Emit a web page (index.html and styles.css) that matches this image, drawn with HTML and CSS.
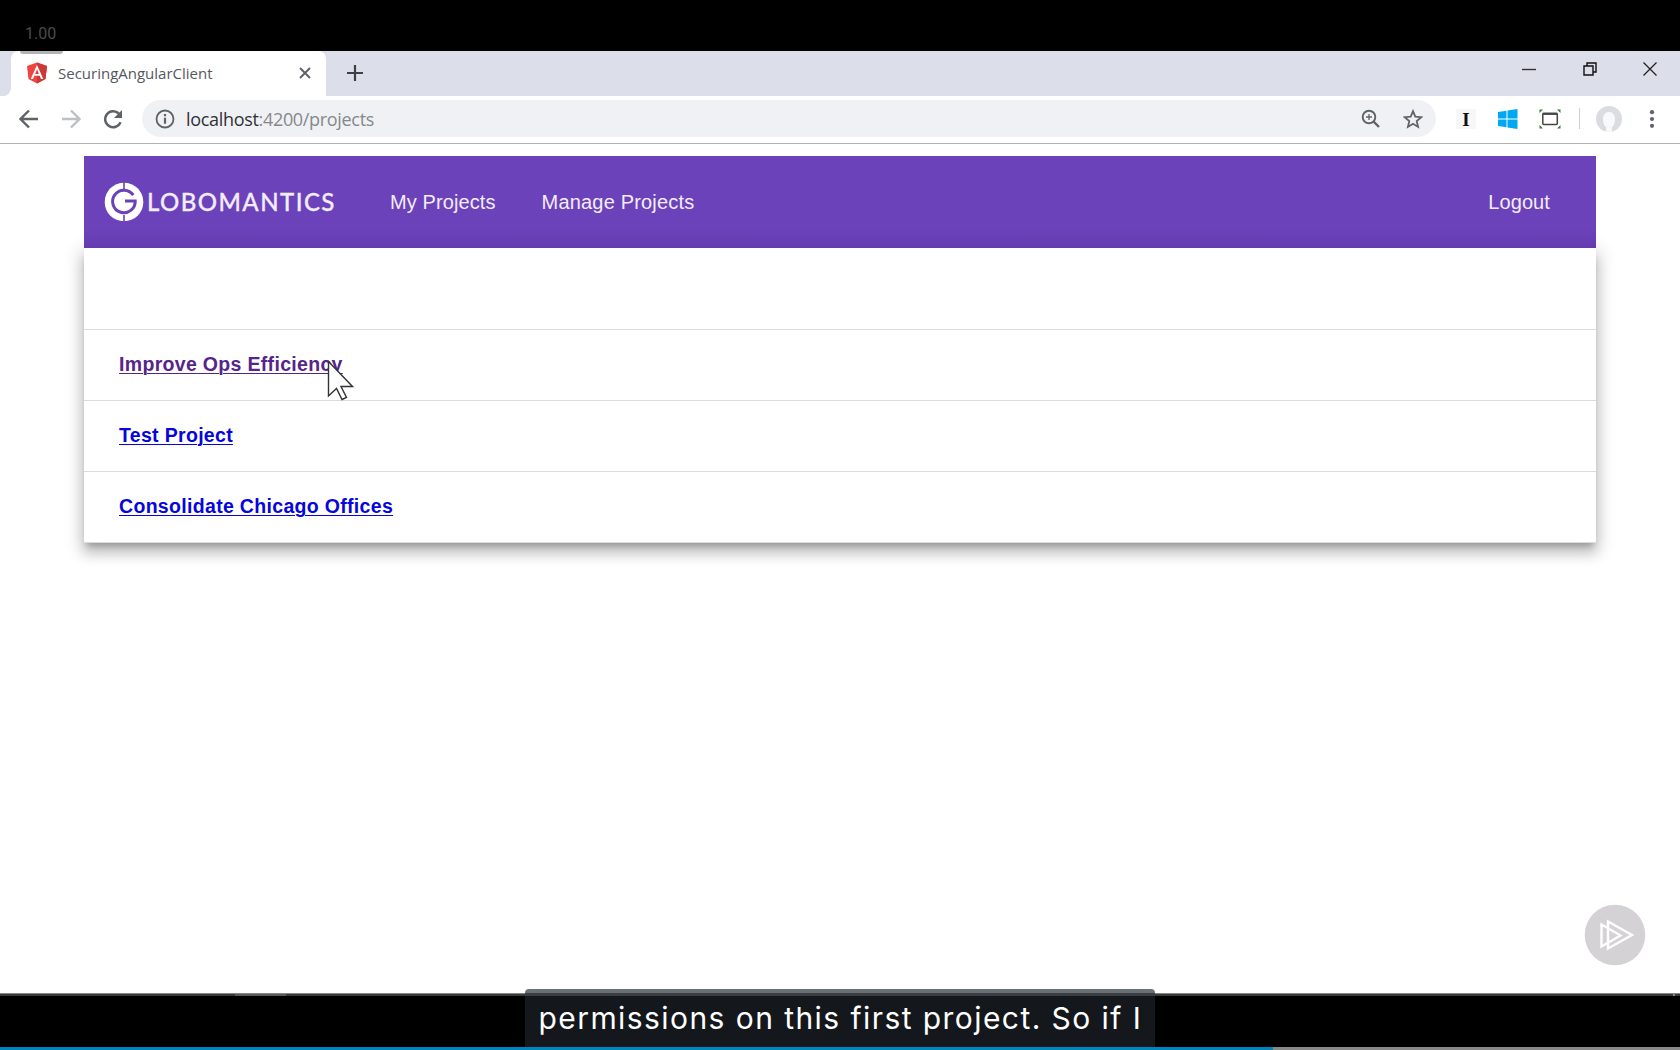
FILE: index.html
```html
<!DOCTYPE html>
<html lang="en">
<head>
<meta charset="utf-8">
<title>SecuringAngularClient</title>
<link rel="stylesheet" href="styles.css">
</head>
<body>
<div class="player">
  <div class="speed"><span>1.00</span></div>
  <div class="browser">
    <div class="tabbar">
      <div class="tab-edge"></div>
      <div class="tab">
        <span class="notch"></span>
        <svg class="favicon" width="22" height="22" viewBox="0 0 22 22"><path fill="#f0443e" d="M11 0.500 21 4l-1.500 13L11 21.500 2.500 17 1 4z"/><path fill="#c93a38" d="M11 .500 21 4l-1.500 13L11 21.500z"/><path fill="#fff" fill-rule="evenodd" d="M11 3 4.700 17H7l1.300-3.200h5.400L15 17h2.300zM11 7.300l1.800 4.600H9.200z"/></svg>
        <span class="tab-title">SecuringAngularClient</span>
        <svg class="tab-close" width="12" height="12" viewBox="0 0 12 12"><path d="M1 1l10 10M11 1 1 11" stroke="#5f6368" stroke-width="2"/></svg>
      </div>
      <svg class="new-tab" width="16" height="16" viewBox="0 0 16 16"><path d="M8 0v16M0 8h16" stroke="#3c4043" stroke-width="2.200"/></svg>
      <div class="window-buttons">
        <svg width="14" height="14" viewBox="0 0 14 14"><path d="M0 7.500h14" stroke="#333" stroke-width="1.400"/></svg>
        <svg width="14" height="14" viewBox="0 0 14 14"><path d="M1 4h9v9H1zM4 4V1h9v9h-3" fill="none" stroke="#111" stroke-width="1.400"/></svg>
        <svg width="14" height="14" viewBox="0 0 14 14"><path d="M.5.5l13 13M13.500.500l-13 13" stroke="#222" stroke-width="1.300"/></svg>
      </div>
    </div>
    <div class="toolbar">
      <svg class="nav-icon" width="20" height="20" viewBox="0 0 20 20"><path d="M19 10H2M10 1.500 1.500 10l8.500 8.500" fill="none" stroke="#5f6368" stroke-width="2.400"/></svg>
      <svg class="nav-icon" width="20" height="20" viewBox="0 0 20 20"><path d="M1 10h17M10 1.500l8.500 8.500-8.500 8.500" fill="none" stroke="#bdbfc2" stroke-width="2.400"/></svg>
      <svg class="nav-icon" width="20" height="20" viewBox="0 0 20 20"><path d="M17.600 13.200A8 8 0 1 1 15.800 4.500" fill="none" stroke="#5f6368" stroke-width="2.500"/><path d="M19 1v8h-8z" fill="#5f6368"/></svg>
      <div class="omnibox">
        <svg width="20" height="20" viewBox="0 0 20 20"><circle cx="10" cy="10" r="8.500" fill="none" stroke="#5f6368" stroke-width="1.800"/><path d="M10 8.800v6M10 5v2.200" stroke="#5f6368" stroke-width="2.200"/></svg>
        <span class="url"><b>localhost</b>:4200/projects</span>
        <svg class="zoom-icon" width="20" height="20" viewBox="0 0 20 20"><circle cx="8" cy="8" r="6.300" fill="none" stroke="#5f6368" stroke-width="1.900"/><path d="M12.500 12.500 18 18" stroke="#5f6368" stroke-width="2.400"/><path d="M8 5v6M5 8h6" stroke="#5f6368" stroke-width="1.300"/></svg>
        <svg class="star" width="20" height="20" viewBox="0 0 20 20"><path d="M10 2.200l2.300 5.500 6 .5-4.600 3.900 1.400 5.800-5.100-3.100-5.100 3.100 1.400-5.800L1.700 8.200l6-.5z" fill="none" stroke="#5f6368" stroke-width="1.800"/></svg>
      </div>
      <span class="ext-i">I</span>
      <svg class="ext" width="20" height="20" viewBox="0 0 20 20"><path fill="#00a8f3" d="M0 3l8.500-1.200v7.700H0zM9.500 1.600 19.500 0v9.500h-10zM0 10.500h8.500v7.700L0 17zM9.500 10.500h10V20l-10-1.500z"/></svg>
      <svg class="ext ext-capture" width="22" height="20" viewBox="0 0 22 20"><rect x="3.800" y="4.500" width="14.500" height="11" rx="1" fill="none" stroke="#444" stroke-width="1.500"/><path d="M3.500 4.800h15" stroke="#444" stroke-width="2.200"/><path d="M.500 4V.500H4zM18 .500h3.500V4zM21.500 16v3.500H18zM4 19.500H.500V16z" fill="#3c7a3c"/></svg>
      <span class="separator"></span>
      <svg class="avatar" width="26" height="26" viewBox="0 0 26 26"><circle cx="13" cy="13" r="13" fill="#dadce0"/><path d="M10 25.500l.2-4C7.900 19.500 7 16.500 7 13c0-4.300 2.500-7 6-7s6 2.700 6 7c0 3.500-.9 6.500-3.200 8.500l.2 4q-3 .8-6 0z" fill="#f8f9fa"/></svg>
      <svg class="menu" width="6" height="18" viewBox="0 0 6 18"><g fill="#5f6368"><circle cx="3" cy="2.200" r="2.100"/><circle cx="3" cy="9" r="2.100"/><circle cx="3" cy="15.800" r="2.100"/></g></svg>
    </div>
    <div class="page">
      <header class="app-bar">
        <svg class="logo-mark" width="40" height="40" viewBox="0 0 40 40"><circle cx="20" cy="20" r="19.300" fill="#fff"/><path d="M29.300 13.200A11.300 11.300 0 1 0 31.200 19H21" fill="none" stroke="#6c42ba" stroke-width="3"/><path d="M20 0v7M20 33v7" stroke="#6c42ba" stroke-width="1.600"/></svg>
        <span class="logo-text">LOBOMANTICS</span>
        <nav class="links"><a>My Projects</a><a>Manage Projects</a></nav>
        <a class="logout">Logout</a>
      </header>
      <main class="card">
        <div class="row row-head"></div>
        <div class="row"><a class="visited">Improve Ops Efficiency</a>
          <svg class="cursor" width="27" height="42" viewBox="0 0 27 42"><path d="M1.500 1.500v34.500l8-7.500 5.500 11 4.500-2-5.500-11h11.500z" fill="#fff" stroke="#333" stroke-width="1.400"/></svg>
        </div>
        <div class="row"><a>Test Project</a></div>
        <div class="row"><a>Consolidate Chicago Offices</a></div>
      </main>
      <svg class="badge" width="62" height="62" viewBox="0 0 62 62"><circle cx="31" cy="31" r="30.300" fill="#d4d2d5"/><path d="M17.500 20.500v22l19-11zM24 17.500v27L48 31z" fill="none" stroke="#fff" stroke-width="2.400"/></svg>
    </div>
  </div>
  <div class="bottom">
    <div class="seam"><span class="seam-mark"></span><span class="seam-end"></span></div>
    <div class="progress"><span></span></div>
    <div class="caption"><span>permissions on this first project. So if I</span></div>
  </div>
</div>
</body>
</html>
```
FILE: styles.css
```css
* { box-sizing: border-box; }
body { margin: 0; background: #000; overflow: hidden; }
svg { display: block; flex: none; }
.player { width: 1680px; height: 1050px; display: flex; flex-direction: column; }

.speed { height: 51px; padding: 23px 0 0 25px; color: #4b4b4b; font: 16px/22px Roboto, sans-serif; }
.browser { height: 942px; display: flex; flex-direction: column; background: #fff; }

.tabbar { height: 44.500px; flex: none; display: flex; background: #dcdee9; }
.tab-edge { width: 10.500px; background: linear-gradient(90deg, #dcdee9 50%, #fff 50%); }
.tab-edge::before { content: ""; display: block; height: 100%; background: #dcdee9; border-bottom-right-radius: 8px; }
.tab { position: relative; width: 315px; display: flex; align-items: center; padding: 0 0 1px 15.500px; background: #fff; border-radius: 8px 8px 0 0; }
.notch { position: absolute; left: 9px; top: 0; width: 43px; height: 3px; background: #b4b4b4; border-radius: 0 0 8px 8px; }
.tab-title { margin-left: 10px; width: 240.500px; color: #55585d; font: 15px/20px "Open Sans", sans-serif; letter-spacing: 0; }
.new-tab { margin: 14px 0 0 21px; }
.window-buttons { margin: 11px 23px 0 auto; display: flex; gap: 46.500px; }

.toolbar { height: 48.500px; flex: none; display: flex; align-items: center; padding: 0 25px 1px 19px; border-bottom: 1.500px solid #b1b1b4; background: #fff; }
.nav-icon { margin-right: 22px; }
.omnibox { width: 1294px; height: 37px; display: flex; align-items: center; padding: 0 13px; border-radius: 19px; background: #f0f1f4; margin-left: -3px; }
.url { margin-left: 11px; color: #85888d; font: 18px/24px "Open Sans", sans-serif; letter-spacing: -0.320px; }
.url b { font-weight: 400; color: #303236; }
.zoom-icon { margin-left: auto; }
.star { margin-left: 22px; }
.ext-i { width: 20px; height: 20px; margin-left: 20px; background: #f7f7f7; color: #111; font: bold 19px/21px "Liberation Serif", serif; text-align: center; }
.ext { margin-left: 22px; }
.ext-capture { margin-left: 21px; }
.separator { width: 1px; height: 21px; margin: 0 16px 0 18px; background: #cfd0d4; }
.menu { margin-left: auto; }

.page { position: relative; flex: 1; padding: 12px 84px 0; background: #fff; }
.app-bar { position: relative; z-index: 1; height: 92px; display: flex; align-items: center; padding: 0 46px 0 20px; background: linear-gradient(#6c42ba 80%, #643bb0); color: #f3edfb; font: 20px/24px "Liberation Sans", Arial, sans-serif; letter-spacing: .100px; }
.logo-text { width: 190px; margin-left: 3px; font: 500 24px/30px Lato, sans-serif; letter-spacing: 1.450px; -webkit-text-stroke: .300px #f3edfb; }
.links { display: flex; gap: 46px; margin: -1px 0 0 53px; }
.links a + a { letter-spacing: .180px; }
.logout { margin: -1px 0 0 auto; }
.card { background: #fff; height: 295px; box-shadow: 0 6px 6px -3px rgba(0,0,0,.2), 0 10px 12px 1px rgba(0,0,0,.16), 0 4px 18px 3px rgba(0,0,0,.14); }
.row { position: relative; height: 71px; padding: 22px 35px; border-bottom: 1px solid #dcdcde; }
.row-head { height: 82px; }
.row a { color: #0505dc; font: bold 19.500px/24px "Liberation Sans", Arial, sans-serif; letter-spacing: .320px; text-decoration: underline; text-decoration-thickness: 1px; text-underline-offset: 2px; }
.row a.visited { color: #55258a; }
.cursor { position: absolute; left: 243px; top: 30px; }
.badge { position: absolute; left: 1583.500px; top: 759.500px; }

.bottom { position: relative; flex: 1; display: flex; flex-direction: column; justify-content: space-between; background: #000; }
.seam { height: 3px; display: flex; justify-content: space-between; padding: 0 5px 0 235px; background: #393939; border-top: 1px solid #858786; }
.seam-mark { width: 51px; background: #5a5a5a; }
.seam-end { width: 2px; background: #888; }
.progress { height: 3px; background: #888; }
.progress span { display: block; width: 1273px; height: 3px; background: #0084bd; }
.caption { position: absolute; left: 525px; top: -4px; width: 630px; height: 58px; padding: 9px 0 0 13.500px; border-radius: 4px 4px 0 0; background: linear-gradient(#6b7074 4px, #3a3e42 4px, #3a3e42 7px, #14171c 7px); color: #fff; font: 30px/40px Inter, sans-serif; letter-spacing: 1.430px; white-space: nowrap; }
```
